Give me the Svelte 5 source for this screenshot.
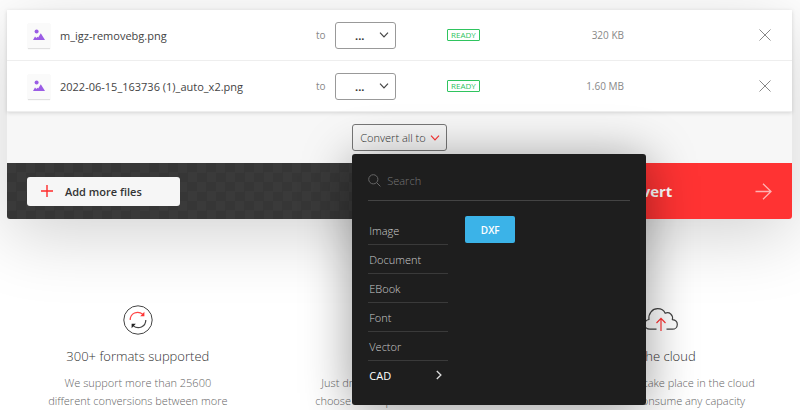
<script lang="ts">
  interface FileRow {
    id: number;
    name: string;
    size: string;
  }

  let files: FileRow[] = $state([
    { id: 1, name: "m_igz-removebg.png", size: "320 KB" },
    { id: 2, name: "2022-06-15_163736 (1)_auto_x2.png", size: "1.60 MB" },
  ]);

  const categories: Record<string, string[]> = {
    Image: ["JPG", "PNG", "WEBP"],
    Document: ["PDF", "DOCX"],
    EBook: ["EPUB", "MOBI"],
    Font: ["TTF", "WOFF"],
    Vector: ["SVG", "EPS"],
    CAD: ["DXF"],
  };

  let menuOpen = $state(true);
  let active = $state("CAD");
  let search = $state("");

  // Typing in the search box looks through every category
  let formats = $derived(
    search
      ? Object.values(categories)
          .flat()
          .filter((f) => f.includes(search.toUpperCase()))
      : categories[active]
  );

  function removeFile(id: number) {
    files = files.filter((f) => f.id !== id);
  }
</script>

<main>
  <section class="converter">
    <ul class="files">
      {#each files as file (file.id)}
        <li class="file">
          <span class="thumb">
            <svg width="12" height="12" viewBox="0 0 12 12" fill="#9b5de5">
              <circle cx="3.6" cy="2.6" r="2" />
              <path d="M0 11 L2 7.4 L3.4 9 L4.4 7.8 L5.2 8.6 L7.8 4.2 L12 11 Z" />
            </svg>
          </span>
          <span class="name">{file.name}</span>
          <label class="to" for="format-{file.id}">to</label>
          <span class="picker">
            <select id="format-{file.id}">
              <option>...</option>
              <option>DXF</option>
            </select>
            <svg class="chevron" width="10" height="6" viewBox="0 0 10 6">
              <path d="M1 .7 L5 4.8 L9 .7" fill="none" stroke="#444" stroke-width="1.2" />
            </svg>
          </span>
          <span class="status"><span class="badge">READY</span></span>
          <span class="size">{file.size}</span>
          <button class="remove" aria-label="Remove {file.name}" onclick={() => removeFile(file.id)}>
            <svg width="12" height="12" viewBox="0 0 12 12">
              <path d="M.5 .5 L11.5 11.5 M11.5 .5 L.5 11.5" stroke="#888" stroke-width="1" />
            </svg>
          </button>
        </li>
      {/each}
    </ul>

    <div class="all">
      <div class="all-wrap">
        <button class="all-button" aria-expanded={menuOpen} onclick={() => (menuOpen = !menuOpen)}>
          Convert all to
          <svg width="10" height="6" viewBox="0 0 10 6">
            <path d="M1 .7 L5 4.8 L9 .7" fill="none" stroke="#ff3333" stroke-width="1.2" />
          </svg>
        </button>

        {#if menuOpen}
          <div class="menu">
            <div class="search">
              <svg width="13" height="13" viewBox="0 0 13 13" fill="none" stroke="#666">
                <circle cx="5.3" cy="5.3" r="4.6" />
                <path d="M8.7 8.7 L12.4 12.4" />
              </svg>
              <input type="text" placeholder="Search" aria-label="Search" bind:value={search} />
            </div>
            <div class="menu-body">
              <ul class="categories">
                {#each Object.keys(categories) as category}
                  <li>
                    <button class:active={category === active} onclick={() => (active = category)}>
                      {category}
                      {#if category === active}
                        <svg width="6" height="10" viewBox="0 0 6 10">
                          <path d="M.8 1 L4.9 5 L.8 9" fill="none" stroke="#ddd" stroke-width="1.3" />
                        </svg>
                      {/if}
                    </button>
                  </li>
                {/each}
              </ul>
              <div class="formats">
                {#each formats as format}
                  <button>{format}</button>
                {/each}
              </div>
            </div>
          </div>
        {/if}
      </div>
    </div>

    <div class="actions">
      <div class="add-wrap">
        <button class="add">
          <svg width="12" height="12" viewBox="0 0 12 12">
            <path d="M6 0 V12 M0 6 H12" stroke="#ff2a2a" stroke-width="1.4" />
          </svg>
          Add more files
        </button>
      </div>
      <button class="convert">
        <span>Convert</span>
        <svg width="17" height="17" viewBox="0 0 17 17">
          <path d="M.5 8.5 H16 M8 .8 L16 8.5 L8 16.2" fill="none" stroke="#ffb3b3" stroke-width="1.3" />
        </svg>
      </button>
    </div>
  </section>

  <section class="features">
    <article>
      <svg width="30" height="30" viewBox="0 0 30 30" fill="none">
        <circle cx="15" cy="15" r="14.2" stroke="#444" />
        <path d="M7.2 15 C7.2 8.5 14.5 4.8 20 9.4" stroke="#ff4444" stroke-width="1.2" />
        <path d="M21.4 6.8 V11.2 H17.2 Z" fill="#ff3333" />
        <path d="M22.8 15 C22.8 21.5 15.5 25.2 10 20.6" stroke="#444" stroke-width="1.2" />
        <path d="M8.6 23.2 V18.8 H12.8 Z" fill="#222" />
      </svg>
      <h3>300+ formats supported</h3>
      <p>We support more than 25600 different conversions between more</p>
    </article>
    <article>
      <svg width="30" height="30" viewBox="0 0 30 30" fill="none">
        <circle cx="15" cy="15" r="14.2" stroke="#444" />
        <path d="M15 7 V15 L20 18" stroke="#ff4444" />
      </svg>
      <h3>Fast and easy</h3>
      <p>Just drop your files on the page, choose an output format and click</p>
    </article>
    <article>
      <svg width="34" height="30" viewBox="0 0 34 30" fill="none">
        <path
          d="M12.5 24.2 H6 C2.8 24.2 .7 22 .7 19.3 C.7 16.7 2.5 15 4.9 14.5 C4.3 8.3 8.3 3.7 13.7 3.7 C17.4 3.7 20 5.6 21.2 8.2 C25.3 6.6 29.4 9.6 28.4 14.6 C31.4 15 33.3 17 33.3 19.4 C33.3 22.2 31.2 24.2 28.4 24.2 H22.5"
          stroke="#444"
          stroke-width="1.2"
        />
        <path d="M17 26 V13.5 M12.5 18 L17 13.3 L21.5 18" stroke="#ff3333" stroke-width="1.2" />
      </svg>
      <h3>In the cloud</h3>
      <p>All conversions take place in the cloud and will not consume any capacity</p>
    </article>
  </section>
</main>

<style>
  :global(body) {
    margin: 0;
    background: #fff;
    color: #333;
    font-family: "Open Sans", "Noto Sans", sans-serif;
    overflow: hidden;
  }

  main {
    padding: 10px 8px 0 7px;
  }

  button,
  input,
  select {
    font-family: inherit;
    margin: 0;
    padding: 0;
    border: 0;
    background: none;
    color: inherit;
  }

  button {
    cursor: pointer;
  }

  svg {
    display: block;
    flex: none;
  }

  ul {
    list-style: none;
    margin: 0;
    padding: 0;
  }

  .converter {
    border-radius: 3px;
    background: #f7f7f7;
    box-shadow: 0 16px 70px rgba(0, 0, 0, 0.18);
  }

  .files {
    background: #fff;
    box-shadow: 0 1px 4px rgba(0, 0, 0, 0.14);
  }

  .file {
    display: grid;
    grid-template-columns: 32px 256fr 19px 112fr 112fr 65fr 147fr;
    align-items: center;
    height: 50px;
    padding: 0 21px;
    border-bottom: 1px solid #eee;
  }

  .thumb {
    display: grid;
    place-items: center;
    width: 22px;
    height: 25px;
    background: #fafafa;
    box-shadow: 0 1px 1px rgba(0, 0, 0, 0.12);
  }

  .name {
    color: #444;
    font-size: 11px;
    white-space: nowrap;
  }

  .to {
    color: #888;
    font-size: 10px;
  }

  .picker {
    display: grid;
    align-items: center;
    width: 61px;
  }

  .picker > * {
    grid-area: 1 / 1;
  }

  select {
    appearance: none;
    box-sizing: border-box;
    width: 100%;
    height: 27px;
    padding-left: 19px;
    border: 1px solid #999;
    border-radius: 3px;
    font-size: 11px;
    font-weight: 700;
  }

  .chevron {
    justify-self: end;
    margin-right: 7px;
    pointer-events: none;
  }

  .badge {
    display: block;
    width: max-content;
    padding: 0 3px;
    border: 1px solid #2fc45f;
    border-radius: 1px;
    color: #2fc45f;
    font-size: 8px;
    line-height: 10px;
  }

  .size {
    color: #888;
    font-size: 10px;
    text-align: right;
  }

  .remove {
    justify-self: end;
  }

  .all {
    display: flex;
    justify-content: center;
    padding: 12px 0;
  }

  .all-wrap {
    position: relative;
  }

  .all-button {
    display: flex;
    align-items: center;
    gap: 4px;
    height: 27px;
    padding: 0 6px 0 7px;
    border: 1px solid #777;
    border-radius: 3px;
    font-size: 11px;
    font-weight: 300;
    box-sizing: border-box;
  }

  .menu {
    position: absolute;
    z-index: 2;
    top: 30px;
    left: 0;
    width: 294px;
    box-sizing: border-box;
    padding: 13px 16px 16px;
    border-radius: 3px;
    background: #1e1e1e;
    color: #ccc;
    box-shadow: 0 5px 50px rgba(0, 0, 0, 0.4);
  }

  .search {
    display: flex;
    align-items: center;
    gap: 6px;
    height: 33px;
    border-bottom: 1px solid #444;
    margin-bottom: 15px;
  }

  .search svg {
    margin-bottom: 6px;
  }

  .search input {
    flex: 1;
    min-width: 0;
    height: 27px;
    margin-bottom: 6px;
    font-size: 11px;
    font-weight: 300;
    outline: none;
  }

  .search input::placeholder {
    color: #777;
    opacity: 1;
  }

  .menu-body {
    display: flex;
    gap: 17px;
  }

  .categories {
    width: 80px;
  }

  .categories li + li {
    border-top: 1px solid #3a3a3a;
  }

  .categories button {
    display: flex;
    align-items: center;
    justify-content: space-between;
    width: 100%;
    height: 28px;
    padding: 0 6px 0 1px;
    font-size: 11px;
    font-weight: 300;
  }

  .categories button.active {
    color: #fff;
    font-weight: 400;
  }

  .formats {
    display: flex;
    flex-wrap: wrap;
    align-content: flex-start;
    gap: 6px;
    flex: 1;
  }

  .formats button {
    width: 50px;
    height: 27px;
    border-radius: 2px;
    background: #3bb3e8;
    color: #fff;
    font-size: 10px;
    font-weight: 600;
  }

  .actions {
    display: flex;
    height: 56px;
    border-radius: 0 0 3px 3px;
    overflow: hidden;
  }

  .add-wrap {
    display: flex;
    flex: 2;
    align-items: center;
    padding-left: 20px;
    background: repeating-conic-gradient(#363636 0 25%, #3a3a3a 0 50%) 0 0 / 19px 19px;
  }

  .add {
    display: flex;
    align-items: center;
    gap: 12px;
    width: 153px;
    height: 29px;
    padding-left: 14px;
    border-radius: 3px;
    background: #f6f6f6;
    color: #333;
    font-size: 11px;
    font-weight: 600;
  }

  .convert {
    display: grid;
    grid-template-columns: 1fr auto;
    flex: 1;
    align-items: center;
    padding: 0 20px;
    background: #ff3333;
    color: #fff;
    font-size: 15px;
    font-weight: 700;
  }

  .features {
    display: grid;
    grid-template-columns: repeat(3, 1fr);
    margin-top: 86px;
    text-align: center;
  }

  .features article {
    display: flex;
    flex-direction: column;
    align-items: center;
  }

  .features h3 {
    margin: 12px 0 9px;
    font-size: 13px;
    font-weight: 300;
    line-height: 18px;
  }

  .features p {
    max-width: 190px;
    margin: 0;
    color: #666;
    font-size: 11px;
    font-weight: 300;
    line-height: 18px;
  }
</style>
